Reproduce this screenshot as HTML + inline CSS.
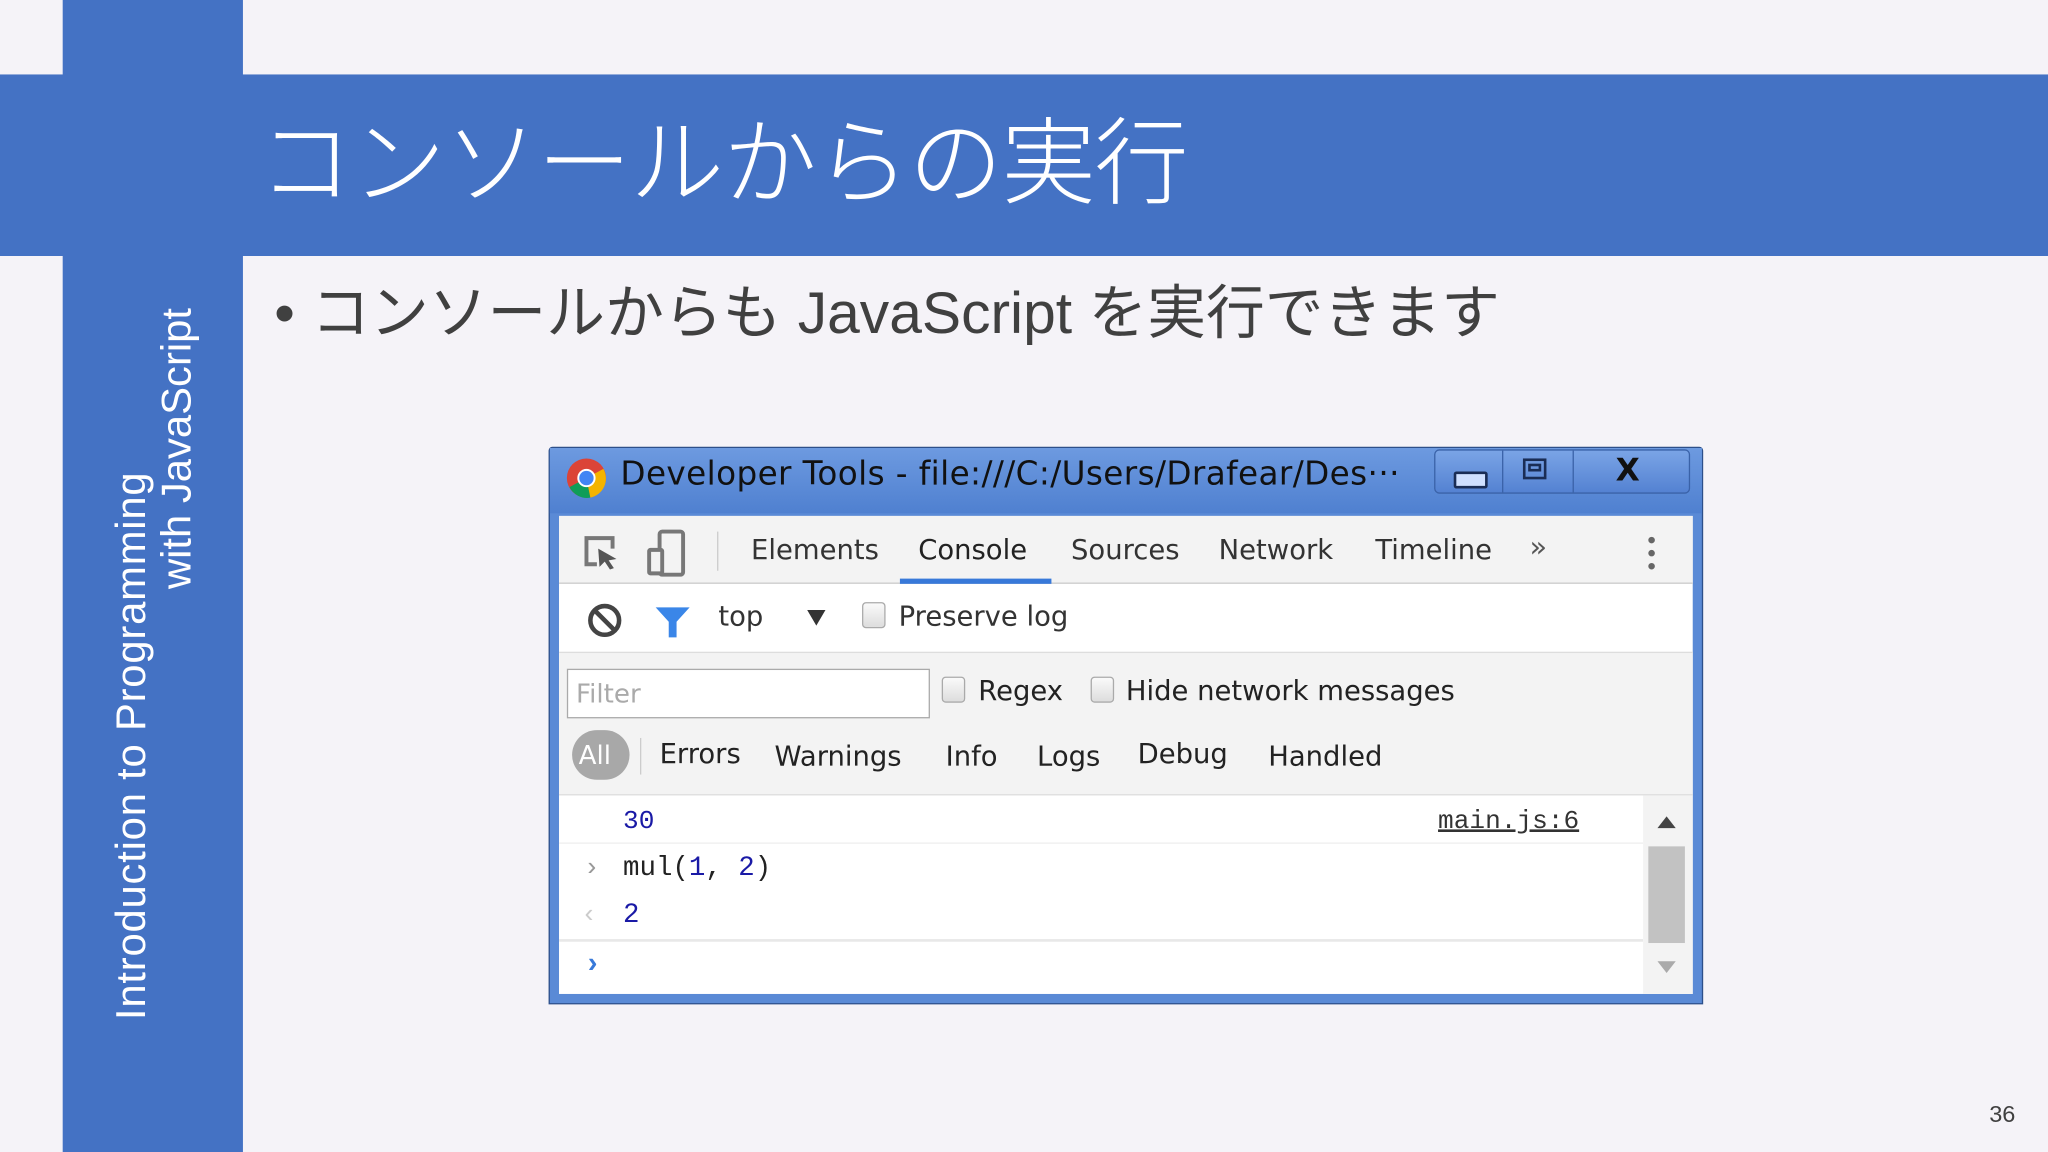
<!DOCTYPE html>
<html><head><meta charset="utf-8"><style>
html,body{margin:0;padding:0;width:2048px;height:1152px;overflow:hidden;background:#F5F3F8}
#w{position:absolute;left:0;top:0;width:1568px;height:882px;transform:scale(1.30612);transform-origin:0 0;font-family:"Liberation Sans","Noto Sans CJK JP",sans-serif}
.a{position:absolute}
.dt{font-family:"DejaVu Sans","Liberation Sans",sans-serif;color:#222;white-space:nowrap}
.cb{position:absolute;width:16px;height:18px;border:1px solid #aaa;border-radius:3px;background:linear-gradient(#fafafa,#ddd)}
.mono{font-family:"Liberation Mono","DejaVu Sans Mono",monospace}
.rot{position:absolute;transform:rotate(-90deg);transform-origin:0 0;color:#fff;font-size:32px;white-space:nowrap;line-height:36px}
</style></head><body><div id="w">
<div class="a" style="left:48px;top:0;width:138px;height:882px;background:#4472C4"></div>
<div class="a" style="left:0;top:57px;width:1568px;height:139px;background:#4472C4"></div>
<div class="a" style="left:198px;top:66px;font-size:72px;color:#fff;white-space:nowrap;letter-spacing:-0.9px;font-family:'Noto Sans CJK JP',sans-serif;font-weight:300">コンソールからの実行</div>
<div class="a" style="left:210px;top:203px;font-size:45px;color:#404040;white-space:nowrap;font-family:'Liberation Sans','Noto Sans CJK JP',sans-serif">• コンソールからも JavaScript を実行できます</div>
<div class="rot" style="left:82px;top:781px;letter-spacing:0.6px">Introduction to Programming</div>
<div class="rot" style="left:117px;top:451px;letter-spacing:0px">with JavaScript</div>
<div class="a" style="left:1523px;top:843px;font-size:18px;color:#404040">36</div>

<!-- devtools window -->
<div class="a" style="left:420px;top:342px;width:884px;height:427px;background:#5a8ad6;border:1px solid #2d4f8a;box-sizing:border-box;border-radius:3px 3px 0 0"></div>
<div class="a" style="left:421px;top:343px;width:882px;height:50px;background:linear-gradient(#6d9ae0,#4f80d0)"></div>
<svg class="a" style="left:432px;top:349px" width="34" height="34" viewBox="0 0 34 34"><circle cx="17" cy="17" r="15" fill="#db4437"/><path d="M17 17 L4 24 A15 15 0 0 0 20 32 Z" fill="#0f9d58"/><path d="M17 17 L20 32 A15 15 0 0 0 30 10 Z" fill="#f4b400"/><circle cx="17" cy="17" r="7" fill="#fff"/><circle cx="17" cy="17" r="5.5" fill="#4285f4"/></svg>
<div class="a dt" style="left:475px;top:348px;font-size:25px;letter-spacing:0.3px;color:#111">Developer Tools - file:///C:/Users/Drafear/Des···</div>
<div class="a" style="left:1098px;top:344px;width:196px;height:34px;border:1px solid #3a62a8;border-radius:4px;box-sizing:border-box;background:linear-gradient(#7aa4e6,#5482d2)"></div>
<div class="a" style="left:1150px;top:345px;width:1px;height:32px;background:#3a62a8"></div>
<div class="a" style="left:1204px;top:345px;width:1px;height:32px;background:#3a62a8"></div>
<div class="a" style="left:1113px;top:361px;width:22px;height:9px;border:2px solid #1a2d55;border-radius:2px;background:#cfe0ff"></div>
<div class="a" style="left:1166px;top:351px;width:18px;height:16px;border:2px solid #1a2d55;box-sizing:border-box"></div>
<div class="a" style="left:1170px;top:355px;width:10px;height:6px;border:2px solid #1a2d55;box-sizing:border-box"></div>
<div class="a dt" style="left:1237px;top:346px;font-size:24px;color:#111;font-weight:bold">X</div>

<div class="a" style="left:428px;top:395px;width:868px;height:366px;background:#fff"></div>
<div class="a" style="left:428px;top:395px;width:868px;height:52px;background:#f3f3f3;border-bottom:1px solid #ccc;box-sizing:border-box"></div>
<svg class="a" style="left:445px;top:408px" width="34" height="30" viewBox="0 0 34 30"><path d="M12 24 H4 V4 H24 V12" fill="none" stroke="#777" stroke-width="3"/><path d="M13 12 L27 20 L21 21 L25 27 L22 28 L18 22 L14 26 Z" fill="#555"/></svg>
<svg class="a" style="left:493px;top:404px" width="36" height="38" viewBox="0 0 36 38"><rect x="12" y="3" width="18" height="33" rx="2" fill="none" stroke="#777" stroke-width="3"/><rect x="4" y="17" width="10" height="18" rx="1" fill="#f3f3f3" stroke="#777" stroke-width="3"/></svg>
<div class="a" style="left:549px;top:407px;width:1px;height:30px;background:#ccc"></div>
<div class="a dt" style="left:575px;top:409px;font-size:21px;color:#333">Elements</div>
<div class="a dt" style="left:703px;top:409px;font-size:21px;color:#222">Console</div>
<div class="a dt" style="left:820px;top:409px;font-size:21px;color:#333">Sources</div>
<div class="a dt" style="left:933px;top:409px;font-size:21px;color:#333">Network</div>
<div class="a dt" style="left:1053px;top:409px;font-size:21px;color:#333">Timeline</div>
<div class="a dt" style="left:1171px;top:407px;font-size:22px;color:#555">»</div>
<div class="a" style="left:1262px;top:411px;width:5px;height:5px;border-radius:3px;background:#666;box-shadow:0 10px 0 #666,0 20px 0 #666"></div>
<div class="a" style="left:689px;top:443px;width:116px;height:4px;background:#3879d9"></div>

<div class="a" style="left:428px;top:499px;width:868px;height:110px;background:#f3f3f3;border-top:1px solid #ddd;border-bottom:1px solid #ddd;box-sizing:border-box"></div>
<svg class="a" style="left:449px;top:461px" width="28" height="28" viewBox="0 0 28 28"><circle cx="14" cy="14" r="11" fill="none" stroke="#444" stroke-width="3.5"/><path d="M6 6 L22 22" stroke="#444" stroke-width="3.5"/></svg>
<svg class="a" style="left:500px;top:462px" width="30" height="28" viewBox="0 0 30 28"><path d="M2 3 H28 L18 14 V26 H12 V14 Z" fill="#3a86e8"/></svg>
<div class="a dt" style="left:550px;top:460px;font-size:21px;color:#333">top</div>
<div class="a" style="left:618px;top:467px;border-left:7px solid transparent;border-right:7px solid transparent;border-top:12px solid #333"></div>
<div class="cb" style="left:660px;top:461px"></div>
<div class="a dt" style="left:688px;top:460px;font-size:21px;color:#333">Preserve log</div>

<div class="a" style="left:434px;top:512px;width:278px;height:38px;border:1px solid #aaa;background:#fff;box-sizing:border-box"></div>
<div class="a dt" style="left:441px;top:519px;font-size:20px;color:#aaa">Filter</div>
<div class="cb" style="left:721px;top:518px"></div>
<div class="a dt" style="left:749px;top:517px;font-size:21px">Regex</div>
<div class="cb" style="left:835px;top:518px"></div>
<div class="a dt" style="left:862px;top:517px;font-size:21px">Hide network messages</div>
<div class="a" style="left:438px;top:559px;width:44px;height:38px;border-radius:19px;background:#a8a8a8"></div>
<div class="a dt" style="left:443px;top:566px;font-size:20px;color:#fff">All</div>
<div class="a" style="left:490px;top:565px;width:1px;height:28px;background:#ccc"></div>
<div class="a dt" style="left:505px;top:565px;font-size:21px">Errors</div>
<div class="a dt" style="left:593px;top:567px;font-size:21px">Warnings</div>
<div class="a dt" style="left:724px;top:567px;font-size:21px">Info</div>
<div class="a dt" style="left:794px;top:567px;font-size:21px">Logs</div>
<div class="a dt" style="left:871px;top:565px;font-size:21px">Debug</div>
<div class="a dt" style="left:971px;top:567px;font-size:21px">Handled</div>

<div class="a" style="left:428px;top:645px;width:830px;height:1px;background:#eee"></div>
<div class="a" style="left:428px;top:719px;width:830px;height:2px;background:#e8e8e8"></div>
<div class="a mono" style="left:477px;top:618px;font-size:20px;color:#1a1aa6">30</div>
<div class="a mono" style="left:1101px;top:618px;font-size:20px;color:#333;text-decoration:underline">main.js:6</div>
<div class="a mono" style="left:447px;top:654px;font-size:20px;color:#999">›</div>
<div class="a mono" style="left:477px;top:654px;font-size:21px;color:#222">mul(<span style="color:#1a1aa6">1</span>, <span style="color:#1a1aa6">2</span>)</div>
<div class="a mono" style="left:445px;top:690px;font-size:20px;color:#ccc">‹</div>
<div class="a mono" style="left:477px;top:690px;font-size:21px;color:#1a1aa6">2</div>
<div class="a mono" style="left:447px;top:726px;font-size:22px;color:#3879d9;font-weight:bold">›</div>
<div class="a" style="left:1258px;top:609px;width:38px;height:152px;background:#f3f3f3"></div>
<div class="a" style="left:1262px;top:648px;width:28px;height:74px;background:#c2c2c2"></div>
<div class="a" style="left:1269px;top:625px;border-left:7px solid transparent;border-right:7px solid transparent;border-bottom:9px solid #444"></div>
<div class="a" style="left:1269px;top:736px;border-left:7px solid transparent;border-right:7px solid transparent;border-top:9px solid #aaa"></div>
</div></body></html>
